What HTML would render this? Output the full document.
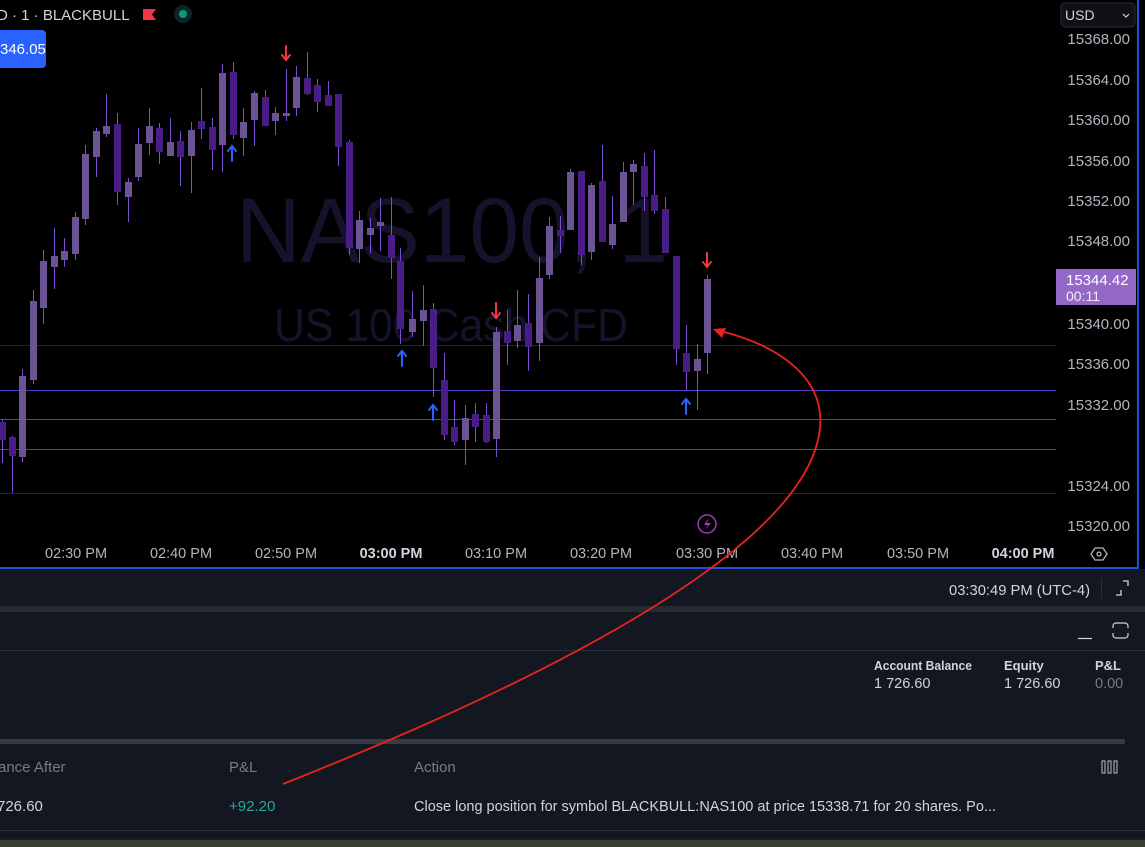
<!DOCTYPE html>
<html><head><meta charset="utf-8"><style>
*{margin:0;padding:0;box-sizing:border-box}
body{width:1145px;height:847px;overflow:hidden;background:#000;font-family:"Liberation Sans",sans-serif;position:relative}
</style></head><body>
<svg width="1145" height="847" style="position:absolute;left:0;top:0" font-family="Liberation Sans, sans-serif">
<rect x="0" y="0" width="1145" height="568" fill="#000"/>
<text x="236" y="262" font-size="92" fill="#16122b" textLength="432" lengthAdjust="spacingAndGlyphs">NAS100, 1</text>
<text x="274" y="341" font-size="46" fill="#16122b" textLength="354" lengthAdjust="spacingAndGlyphs">US 100 Cash CFD</text>
<line x1="0" y1="345.5" x2="1056" y2="345.5" stroke="#262626"/>
<line x1="0" y1="390.5" x2="1056" y2="390.5" stroke="#5a3cc4"/>
<line x1="0" y1="419.5" x2="1056" y2="419.5" stroke="#6a3aa6"/>
<line x1="0" y1="449.5" x2="1056" y2="449.5" stroke="#5a3cb4"/>
<line x1="0" y1="493.5" x2="1056" y2="493.5" stroke="#262626"/>
<g stroke="#7a4ed0" stroke-width="1">
<line x1="2.5" y1="420" x2="2.5" y2="463"/><line x1="12.5" y1="436" x2="12.5" y2="493"/><line x1="22.5" y1="369" x2="22.5" y2="462"/><line x1="33.5" y1="290" x2="33.5" y2="384"/><line x1="43.5" y1="250" x2="43.5" y2="324"/><line x1="54.5" y1="228" x2="54.5" y2="289"/><line x1="64.5" y1="238" x2="64.5" y2="267"/><line x1="75.5" y1="212" x2="75.5" y2="260"/><line x1="85.5" y1="145" x2="85.5" y2="225"/><line x1="96.5" y1="128" x2="96.5" y2="177"/><line x1="106.5" y1="94" x2="106.5" y2="137"/><line x1="117.5" y1="113" x2="117.5" y2="205"/><line x1="128.5" y1="178" x2="128.5" y2="222"/><line x1="138.5" y1="128" x2="138.5" y2="181"/><line x1="149.5" y1="108" x2="149.5" y2="155"/><line x1="159.5" y1="123" x2="159.5" y2="164"/><line x1="170.5" y1="118" x2="170.5" y2="156"/><line x1="180.5" y1="131" x2="180.5" y2="186"/><line x1="191.5" y1="122" x2="191.5" y2="193"/><line x1="201.5" y1="88" x2="201.5" y2="139"/><line x1="212.5" y1="118" x2="212.5" y2="170"/><line x1="222.5" y1="64" x2="222.5" y2="172"/><line x1="233.5" y1="62" x2="233.5" y2="139"/><line x1="243.5" y1="108" x2="243.5" y2="156"/><line x1="254.5" y1="91" x2="254.5" y2="146"/><line x1="265.5" y1="90" x2="265.5" y2="126"/><line x1="275.5" y1="107" x2="275.5" y2="135"/><line x1="286.5" y1="69" x2="286.5" y2="121"/><line x1="296.5" y1="66" x2="296.5" y2="116"/><line x1="307.5" y1="52" x2="307.5" y2="95"/><line x1="317.5" y1="79" x2="317.5" y2="112"/><line x1="328.5" y1="81" x2="328.5" y2="106"/><line x1="338.5" y1="94" x2="338.5" y2="166"/><line x1="349.5" y1="140" x2="349.5" y2="255"/><line x1="359.5" y1="211" x2="359.5" y2="263"/><line x1="370.5" y1="218" x2="370.5" y2="253"/><line x1="380.5" y1="198" x2="380.5" y2="251"/><line x1="391.5" y1="197" x2="391.5" y2="279"/><line x1="400.5" y1="248" x2="400.5" y2="344"/><line x1="412.5" y1="291" x2="412.5" y2="337"/><line x1="423.5" y1="285" x2="423.5" y2="346"/><line x1="433.5" y1="303" x2="433.5" y2="397"/><line x1="444.5" y1="353" x2="444.5" y2="440"/><line x1="454.5" y1="400" x2="454.5" y2="445"/><line x1="465.5" y1="405" x2="465.5" y2="465"/><line x1="475.5" y1="403" x2="475.5" y2="442"/><line x1="486.5" y1="403" x2="486.5" y2="443"/><line x1="496.5" y1="327" x2="496.5" y2="457"/><line x1="507.5" y1="310" x2="507.5" y2="365"/><line x1="517.5" y1="290" x2="517.5" y2="348"/><line x1="528.5" y1="294" x2="528.5" y2="371"/><line x1="539.5" y1="257" x2="539.5" y2="361"/><line x1="549.5" y1="217" x2="549.5" y2="279"/><line x1="560.5" y1="216" x2="560.5" y2="253"/><line x1="570.5" y1="169" x2="570.5" y2="230"/><line x1="581.5" y1="171" x2="581.5" y2="265"/><line x1="591.5" y1="183" x2="591.5" y2="260"/><line x1="602.5" y1="145" x2="602.5" y2="242"/><line x1="612.5" y1="196" x2="612.5" y2="249"/><line x1="623.5" y1="162" x2="623.5" y2="222"/><line x1="633.5" y1="160" x2="633.5" y2="205"/><line x1="644.5" y1="153" x2="644.5" y2="211"/><line x1="654.5" y1="150" x2="654.5" y2="214"/><line x1="665.5" y1="197" x2="665.5" y2="253"/><line x1="676.5" y1="256" x2="676.5" y2="365"/><line x1="686.5" y1="325" x2="686.5" y2="390"/><line x1="697.5" y1="344" x2="697.5" y2="410"/><line x1="707.5" y1="275" x2="707.5" y2="374"/>
</g>
<g>
<rect x="-1" y="422" width="7" height="18" fill="#4a1c87"/><rect x="9" y="437" width="7" height="19" fill="#4a1c87"/><rect x="19" y="376" width="7" height="81" fill="#6b5394"/><rect x="30" y="301" width="7" height="79" fill="#6b5394"/><rect x="40" y="261" width="7" height="47" fill="#6b5394"/><rect x="51" y="256" width="7" height="11" fill="#6b5394"/><rect x="61" y="251" width="7" height="9" fill="#6b5394"/><rect x="72" y="217" width="7" height="37" fill="#6b5394"/><rect x="82" y="154" width="7" height="65" fill="#6b5394"/><rect x="93" y="131" width="7" height="26" fill="#6b5394"/><rect x="103" y="126" width="7" height="8" fill="#6b5394"/><rect x="114" y="124" width="7" height="68" fill="#4a1c87"/><rect x="125" y="182" width="7" height="15" fill="#6b5394"/><rect x="135" y="144" width="7" height="33" fill="#6b5394"/><rect x="146" y="126" width="7" height="17" fill="#6b5394"/><rect x="156" y="128" width="7" height="24" fill="#4a1c87"/><rect x="167" y="142" width="7" height="14" fill="#6b5394"/><rect x="177" y="141" width="7" height="16" fill="#4a1c87"/><rect x="188" y="130" width="7" height="26" fill="#6b5394"/><rect x="198" y="121" width="7" height="8" fill="#4a1c87"/><rect x="209" y="127" width="7" height="23" fill="#4a1c87"/><rect x="219" y="73" width="7" height="72" fill="#6b5394"/><rect x="230" y="72" width="7" height="63" fill="#4a1c87"/><rect x="240" y="122" width="7" height="16" fill="#6b5394"/><rect x="251" y="93" width="7" height="27" fill="#6b5394"/><rect x="262" y="97" width="7" height="29" fill="#4a1c87"/><rect x="272" y="113" width="7" height="8" fill="#6b5394"/><rect x="283" y="113" width="7" height="3" fill="#6b5394"/><rect x="293" y="77" width="7" height="31" fill="#6b5394"/><rect x="304" y="78" width="7" height="16" fill="#4a1c87"/><rect x="314" y="85" width="7" height="17" fill="#4a1c87"/><rect x="325" y="95" width="7" height="11" fill="#4a1c87"/><rect x="335" y="94" width="7" height="53" fill="#4a1c87"/><rect x="346" y="142" width="7" height="106" fill="#4a1c87"/><rect x="356" y="220" width="7" height="29" fill="#6b5394"/><rect x="367" y="228" width="7" height="7" fill="#6b5394"/><rect x="377" y="222" width="7" height="4" fill="#6b5394"/><rect x="388" y="235" width="7" height="23" fill="#4a1c87"/><rect x="397" y="261" width="7" height="68" fill="#4a1c87"/><rect x="409" y="319" width="7" height="13" fill="#6b5394"/><rect x="420" y="310" width="7" height="11" fill="#6b5394"/><rect x="430" y="309" width="7" height="59" fill="#4a1c87"/><rect x="441" y="380" width="7" height="55" fill="#4a1c87"/><rect x="451" y="427" width="7" height="15" fill="#4a1c87"/><rect x="462" y="418" width="7" height="22" fill="#6b5394"/><rect x="472" y="414" width="7" height="13" fill="#4a1c87"/><rect x="483" y="415" width="7" height="27" fill="#4a1c87"/><rect x="493" y="332" width="7" height="107" fill="#6b5394"/><rect x="504" y="331" width="7" height="12" fill="#4a1c87"/><rect x="514" y="325" width="7" height="16" fill="#6b5394"/><rect x="525" y="323" width="7" height="24" fill="#4a1c87"/><rect x="536" y="278" width="7" height="65" fill="#6b5394"/><rect x="546" y="226" width="7" height="49" fill="#6b5394"/><rect x="557" y="230" width="7" height="6" fill="#4a1c87"/><rect x="567" y="172" width="7" height="58" fill="#6b5394"/><rect x="578" y="171" width="7" height="84" fill="#4a1c87"/><rect x="588" y="185" width="7" height="67" fill="#6b5394"/><rect x="599" y="181" width="7" height="61" fill="#4a1c87"/><rect x="609" y="224" width="7" height="21" fill="#6b5394"/><rect x="620" y="172" width="7" height="50" fill="#6b5394"/><rect x="630" y="164" width="7" height="8" fill="#6b5394"/><rect x="641" y="166" width="7" height="31" fill="#4a1c87"/><rect x="651" y="195" width="7" height="16" fill="#4a1c87"/><rect x="662" y="209" width="7" height="44" fill="#4a1c87"/><rect x="673" y="256" width="7" height="93" fill="#4a1c87"/><rect x="683" y="353" width="7" height="19" fill="#4a1c87"/><rect x="694" y="359" width="7" height="12" fill="#6b5394"/><rect x="704" y="279" width="7" height="74" fill="#6b5394"/>
</g>
<g stroke-width="2" fill="none" stroke-linecap="round">
<g stroke="#f23645"><path d="M286 46V59M282 55L286 60L290 55"/><path d="M496 303V317M492 313L496 318L500 313"/><path d="M707 253V266M703 262L707 267L711 262"/></g>
<g stroke="#2962ff"><path d="M232 161V147M228 151L232 146L236 151"/><path d="M402 366V352M398 356L402 351L406 356"/><path d="M433 420V406M429 410L433 405L437 410"/><path d="M686 414V400M682 404L686 399L690 404"/></g>
</g>
<circle cx="707" cy="524" r="9" fill="none" stroke="#a23bb8" stroke-width="1.5"/>
<path d="M709 518L704 525H708L705 530L711 523H707Z" fill="#a23bb8"/>
<g font-size="15" fill="#b2b5be" text-anchor="end">
<text x="1130" y="44">15368.00</text><text x="1130" y="85">15364.00</text><text x="1130" y="125">15360.00</text><text x="1130" y="166">15356.00</text><text x="1130" y="206">15352.00</text><text x="1130" y="246">15348.00</text><text x="1130" y="329">15340.00</text><text x="1130" y="369">15336.00</text><text x="1130" y="410">15332.00</text><text x="1130" y="491">15324.00</text><text x="1130" y="531">15320.00</text>
</g>
<rect x="1056" y="269" width="80" height="36" fill="#9368c9"/>
<text x="1066" y="285" font-size="15" fill="#fff">15344.42</text>
<text x="1066" y="301" font-size="14" fill="#eee">00:11</text>
<g font-size="14.5" fill="#b2b5be" text-anchor="middle">
<text x="76" y="558">02:30 PM</text><text x="181" y="558">02:40 PM</text><text x="286" y="558">02:50 PM</text><text x="391" y="558" font-weight="bold" fill="#d1d4dc">03:00 PM</text><text x="496" y="558">03:10 PM</text><text x="601" y="558">03:20 PM</text><text x="707" y="558">03:30 PM</text><text x="812" y="558">03:40 PM</text><text x="918" y="558">03:50 PM</text><text x="1023" y="558" font-weight="bold" fill="#d1d4dc">04:00 PM</text>
</g>
<path d="M1095 548L1103 548L1107 554L1103 560L1095 560L1091 554Z" fill="none" stroke="#b2b5be" stroke-width="1.3"/>
<circle cx="1099" cy="554" r="2" fill="none" stroke="#b2b5be" stroke-width="1.3"/>
<rect x="1061" y="3" width="74" height="24" rx="4" fill="#0e1015" stroke="#2a2e39"/>
<text x="1065" y="20" font-size="14" fill="#d1d4dc">USD</text>
<path d="M1123 14L1126 17L1129 14" stroke="#d1d4dc" fill="none" stroke-width="1.2"/>
<text x="-3" y="20" font-size="15" fill="#d1d4dc">D · 1 · BLACKBULL</text>
<path d="M143 9H156L152 14.5L156 20H143Z" fill="#f23645"/>
<circle cx="183" cy="14" r="9" fill="#0b2622"/><circle cx="183" cy="14" r="4" fill="#089981"/>
<rect x="-6" y="30" width="52" height="38" rx="4" fill="#2962ff"/>
<text x="0" y="54" font-size="15" fill="#fff">346.05</text>
<rect x="1137" y="0" width="2" height="569" fill="#1e4fd8"/>
<rect x="0" y="567" width="1139" height="2" fill="#1e4fd8"/>
<rect x="0" y="569" width="1145" height="37" fill="#131722"/>
<text x="949" y="595" font-size="15" fill="#d1d4dc" textLength="141" lengthAdjust="spacingAndGlyphs">03:30:49 PM (UTC-4)</text>
<line x1="1101.5" y1="578" x2="1101.5" y2="599" stroke="#2a2e39"/>
<path d="M1121 590V595H1116M1123 581H1128V586" stroke="#d1d4dc" fill="none" stroke-width="1.3"/>
<rect x="0" y="606" width="1145" height="6" fill="#262a33"/>
<rect x="0" y="612" width="1145" height="228" fill="#131722"/>
<line x1="0" y1="650.5" x2="1145" y2="650.5" stroke="#2a2e39"/>
<line x1="1078" y1="638.5" x2="1092" y2="638.5" stroke="#d1d4dc" stroke-width="1.2"/>
<rect x="1113" y="623" width="15" height="15" rx="3" fill="none" stroke="#d1d4dc" stroke-width="1.2"/>
<rect x="1110" y="628" width="21" height="5" fill="#131722"/>
<g font-size="13" fill="#d1d4dc" font-weight="bold"><text x="874" y="670" textLength="98" lengthAdjust="spacingAndGlyphs">Account Balance</text><text x="1004" y="670">Equity</text><text x="1095" y="670">P&amp;L</text></g>
<g font-size="14.5" fill="#d1d4dc"><text x="874" y="688">1 726.60</text><text x="1004" y="688">1 726.60</text><text x="1095" y="688" fill="#787b86">0.00</text></g>
<rect x="0" y="739" width="1125" height="5" fill="#363a45"/>
<g font-size="15" fill="#787b86"><text x="-2" y="772">ance After</text><text x="229" y="772">P&amp;L</text><text x="414" y="772">Action</text></g>
<g stroke="#a0a3ab" stroke-width="1.2" fill="none"><rect x="1102" y="761" width="3" height="12"/><rect x="1108" y="761" width="3" height="12"/><rect x="1114" y="761" width="3" height="12"/></g>
<g font-size="15"><text x="-3" y="811" fill="#d1d4dc">726.60</text><text x="229" y="811" fill="#22ab94">+92.20</text><text x="414" y="811" fill="#d1d4dc" textLength="582" lengthAdjust="spacingAndGlyphs">Close long position for symbol BLACKBULL:NAS100 at price 15338.71 for 20 shares. Po...</text></g>
<line x1="0" y1="830.5" x2="1145" y2="830.5" stroke="#2a2e39"/>
<rect x="0" y="838" width="1145" height="9" fill="#3b3f33"/>
<rect x="0" y="838" width="1145" height="2" fill="#1c1f1c"/>
<path d="M283 784C520 690 790 560 818 440C832 380 780 345 716 330" fill="none" stroke="#e8231f" stroke-width="1.8"/>
<path d="M713 329L726 328L722 338Z" fill="#e8231f"/>
</svg>
</body></html>
